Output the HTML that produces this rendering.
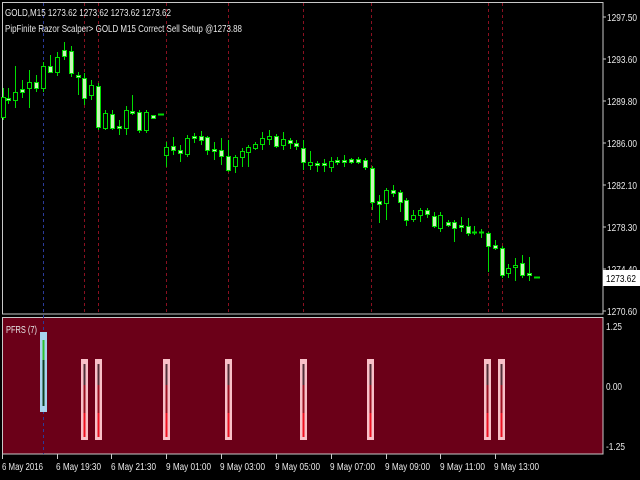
<!DOCTYPE html>
<html><head><meta charset="utf-8"><style>
html,body{margin:0;padding:0;background:#000;width:640px;height:480px;overflow:hidden}
svg{display:block}
text{font-family:"Liberation Sans",sans-serif;font-size:10px;fill:#e8e8e8}
</style></head><body>
<svg width="640" height="480" viewBox="0 0 640 480" xmlns="http://www.w3.org/2000/svg">
<rect width="640" height="480" fill="#000"/>
<rect x="2" y="317" width="601" height="137" fill="#6b0018"/>
<rect x="2.5" y="2.5" width="600.5" height="311.5" fill="none" stroke="#c8c8c8" stroke-width="1"/>
<rect x="2.5" y="317.5" width="600.5" height="136.5" fill="none" stroke="#c8c8c8" stroke-width="1"/>
<g stroke-dasharray="3,3" stroke-width="1">
<line x1="43.5" y1="3" x2="43.5" y2="454" stroke="#2a3a9a"/>
<g stroke="#8a1020">
<line x1="84.5" y1="3" x2="84.5" y2="314"/>
<line x1="98.5" y1="3" x2="98.5" y2="314"/>
<line x1="166.5" y1="3" x2="166.5" y2="314"/>
<line x1="228.5" y1="3" x2="228.5" y2="314"/>
<line x1="303.5" y1="3" x2="303.5" y2="314"/>
<line x1="371.5" y1="3" x2="371.5" y2="314"/>
<line x1="488.5" y1="3" x2="488.5" y2="314"/>
<line x1="502.5" y1="3" x2="502.5" y2="314"/>
</g></g>
<g stroke="#00dd00" stroke-width="1">
<g>
<line x1="3.5" y1="88" x2="3.5" y2="120"/>
<line x1="8.5" y1="88" x2="8.5" y2="104"/>
<line x1="15.5" y1="66" x2="15.5" y2="108"/>
<line x1="22.5" y1="80" x2="22.5" y2="98"/>
<line x1="29.5" y1="70" x2="29.5" y2="108"/>
<line x1="36.5" y1="75" x2="36.5" y2="92"/>
<line x1="43.5" y1="62" x2="43.5" y2="92"/>
<line x1="50.5" y1="55" x2="50.5" y2="72"/>
<line x1="57.5" y1="52" x2="57.5" y2="76"/>
<line x1="64.5" y1="42" x2="64.5" y2="60"/>
<line x1="71.5" y1="46" x2="71.5" y2="77"/>
<line x1="78.5" y1="72" x2="78.5" y2="95"/>
<line x1="84.5" y1="73" x2="84.5" y2="105"/>
<line x1="91.5" y1="80" x2="91.5" y2="100"/>
<line x1="98.5" y1="83" x2="98.5" y2="130"/>
<line x1="105.5" y1="110" x2="105.5" y2="130"/>
<line x1="112.5" y1="110" x2="112.5" y2="130"/>
<line x1="119.5" y1="120" x2="119.5" y2="135"/>
<line x1="126.5" y1="106" x2="126.5" y2="135"/>
<line x1="132.5" y1="95" x2="132.5" y2="115"/>
<line x1="139.5" y1="110" x2="139.5" y2="133"/>
<line x1="146.5" y1="110" x2="146.5" y2="133"/>
<line x1="166.5" y1="142" x2="166.5" y2="167"/>
<line x1="173.5" y1="137" x2="173.5" y2="155"/>
<line x1="180.5" y1="145" x2="180.5" y2="162"/>
<line x1="187.5" y1="135" x2="187.5" y2="157"/>
<line x1="194.5" y1="133" x2="194.5" y2="143"/>
<line x1="201.5" y1="131" x2="201.5" y2="145"/>
<line x1="207.5" y1="136" x2="207.5" y2="155"/>
<line x1="214.5" y1="142" x2="214.5" y2="160"/>
<line x1="221.5" y1="138" x2="221.5" y2="165"/>
<line x1="228.5" y1="140" x2="228.5" y2="172"/>
<line x1="235.5" y1="155" x2="235.5" y2="173"/>
<line x1="242.5" y1="148" x2="242.5" y2="167"/>
<line x1="248.5" y1="145" x2="248.5" y2="167"/>
<line x1="255.5" y1="142" x2="255.5" y2="150"/>
<line x1="262.5" y1="132" x2="262.5" y2="150"/>
<line x1="269.5" y1="130" x2="269.5" y2="145"/>
<line x1="276.5" y1="134" x2="276.5" y2="148"/>
<line x1="283.5" y1="132" x2="283.5" y2="150"/>
<line x1="290.5" y1="138" x2="290.5" y2="149"/>
<line x1="296.5" y1="140" x2="296.5" y2="150"/>
<line x1="303.5" y1="140" x2="303.5" y2="170"/>
<line x1="310.5" y1="151" x2="310.5" y2="170"/>
<line x1="317.5" y1="161" x2="317.5" y2="172"/>
<line x1="324.5" y1="159" x2="324.5" y2="172"/>
<line x1="331.5" y1="157" x2="331.5" y2="172"/>
<line x1="337.5" y1="157" x2="337.5" y2="165"/>
<line x1="344.5" y1="155" x2="344.5" y2="167"/>
<line x1="351.5" y1="158" x2="351.5" y2="164"/>
<line x1="358.5" y1="157" x2="358.5" y2="164"/>
<line x1="365.5" y1="158" x2="365.5" y2="170"/>
<line x1="372.5" y1="166" x2="372.5" y2="210"/>
<line x1="379.5" y1="195" x2="379.5" y2="223"/>
<line x1="386.5" y1="188" x2="386.5" y2="220"/>
<line x1="393.5" y1="185" x2="393.5" y2="197"/>
<line x1="400.5" y1="190" x2="400.5" y2="212"/>
<line x1="406.5" y1="198" x2="406.5" y2="226"/>
<line x1="413.5" y1="210" x2="413.5" y2="222"/>
<line x1="420.5" y1="208" x2="420.5" y2="222"/>
<line x1="427.5" y1="208" x2="427.5" y2="218"/>
<line x1="434.5" y1="212" x2="434.5" y2="228"/>
<line x1="440.5" y1="212" x2="440.5" y2="232"/>
<line x1="448.5" y1="220" x2="448.5" y2="227"/>
<line x1="454.5" y1="220" x2="454.5" y2="242"/>
<line x1="461.5" y1="217" x2="461.5" y2="232"/>
<line x1="468.5" y1="218" x2="468.5" y2="236"/>
<line x1="474.5" y1="226" x2="474.5" y2="235"/>
<line x1="481.5" y1="229" x2="481.5" y2="238"/>
<line x1="488.5" y1="232" x2="488.5" y2="272"/>
<line x1="495.5" y1="240" x2="495.5" y2="250"/>
<line x1="502.5" y1="246" x2="502.5" y2="278"/>
<line x1="508.5" y1="264" x2="508.5" y2="278"/>
<line x1="515.5" y1="258" x2="515.5" y2="281"/>
<line x1="522.5" y1="255" x2="522.5" y2="278"/>
<line x1="529.5" y1="257" x2="529.5" y2="281"/>
</g>
<g fill="#000">
<rect x="1.5" y="97.5" width="4" height="20"/>
<rect x="13.5" y="92.5" width="4" height="8"/>
<rect x="27.5" y="82.5" width="4" height="6"/>
<rect x="41.5" y="66.5" width="4" height="22"/>
<rect x="55.5" y="57.5" width="4" height="15"/>
<rect x="89.5" y="85.5" width="4" height="10"/>
<rect x="103.5" y="113.5" width="4" height="15"/>
<rect x="124.5" y="110.5" width="4" height="18"/>
<rect x="144.5" y="112.5" width="4" height="18"/>
<rect x="164.5" y="147.5" width="4" height="8"/>
<rect x="185.5" y="138.5" width="4" height="16"/>
<rect x="233.5" y="157.5" width="4" height="9"/>
<rect x="240.5" y="151.5" width="4" height="6"/>
<rect x="246.5" y="147.5" width="4" height="5"/>
<rect x="253.5" y="144.5" width="4" height="4"/>
<rect x="260.5" y="138.5" width="4" height="6"/>
<rect x="267.5" y="136.5" width="4" height="3"/>
<rect x="281.5" y="139.5" width="4" height="6"/>
<rect x="308.5" y="162.5" width="4" height="3"/>
<rect x="329.5" y="161.5" width="4" height="6"/>
<rect x="384.5" y="190.5" width="4" height="13"/>
<rect x="411.5" y="215.5" width="4" height="4"/>
<rect x="418.5" y="210.5" width="4" height="5"/>
<rect x="438.5" y="215.5" width="4" height="13"/>
<rect x="506.5" y="268.5" width="4" height="5"/>
<rect x="513.5" y="265.5" width="4" height="2"/>
</g>
<g fill="#c8f5b8">
<rect x="6.5" y="98.5" width="4" height="2"/>
<rect x="20.5" y="89.5" width="4" height="3"/>
<rect x="34.5" y="82.5" width="4" height="6"/>
<rect x="48.5" y="66.5" width="4" height="6"/>
<rect x="62.5" y="50.5" width="4" height="6"/>
<rect x="69.5" y="51.5" width="4" height="22"/>
<rect x="76.5" y="75.5" width="4" height="2"/>
<rect x="82.5" y="78.5" width="4" height="20"/>
<rect x="96.5" y="86.5" width="4" height="41"/>
<rect x="110.5" y="114.5" width="4" height="14"/>
<rect x="117.5" y="126.5" width="4" height="2"/>
<rect x="130.5" y="111.5" width="4" height="2"/>
<rect x="137.5" y="112.5" width="4" height="18"/>
<rect x="151.5" y="115.5" width="4" height="3"/>
<rect x="158.5" y="114" width="5" height="1"/>
<rect x="171.5" y="146.5" width="4" height="4"/>
<rect x="178.5" y="150.5" width="4" height="3"/>
<rect x="192.5" y="136.5" width="4" height="2"/>
<rect x="199.5" y="136.5" width="4" height="4"/>
<rect x="205.5" y="137.5" width="4" height="13"/>
<rect x="212.5" y="149.5" width="4" height="2"/>
<rect x="219.5" y="150.5" width="4" height="6"/>
<rect x="226.5" y="156.5" width="4" height="14"/>
<rect x="274.5" y="136.5" width="4" height="10"/>
<rect x="288.5" y="140.5" width="4" height="3"/>
<rect x="294.5" y="143.5" width="4" height="3"/>
<rect x="301.5" y="148.5" width="4" height="14"/>
<rect x="315.5" y="163.5" width="4" height="2"/>
<rect x="322.5" y="163.5" width="4" height="2"/>
<rect x="335.5" y="160.5" width="4" height="2"/>
<rect x="342.5" y="160.5" width="4" height="2"/>
<rect x="349.5" y="159.5" width="4" height="3"/>
<rect x="356.5" y="159.5" width="4" height="3"/>
<rect x="363.5" y="160.5" width="4" height="7"/>
<rect x="370.5" y="168.5" width="4" height="34"/>
<rect x="377.5" y="201.5" width="4" height="3"/>
<rect x="391.5" y="190.5" width="4" height="3"/>
<rect x="398.5" y="192.5" width="4" height="10"/>
<rect x="404.5" y="200.5" width="4" height="20"/>
<rect x="425.5" y="210.5" width="4" height="4"/>
<rect x="432.5" y="216.5" width="4" height="10"/>
<rect x="446.5" y="222.5" width="4" height="3"/>
<rect x="452.5" y="222.5" width="4" height="6"/>
<rect x="459.5" y="225.5" width="4" height="2"/>
<rect x="466.5" y="226.5" width="4" height="7"/>
<rect x="472.5" y="232" width="4" height="1"/>
<rect x="479.5" y="232" width="4" height="1"/>
<rect x="486.5" y="233.5" width="4" height="13"/>
<rect x="493.5" y="245.5" width="4" height="3"/>
<rect x="500.5" y="248.5" width="4" height="27"/>
<rect x="520.5" y="263.5" width="4" height="12"/>
<rect x="527.5" y="273.5" width="4" height="2"/>
<rect x="534.5" y="277" width="5" height="1"/>
</g>
</g>
<text x="5" y="16" textLength="166" lengthAdjust="spacingAndGlyphs">GOLD,M15  1273.62 1273.62 1273.62 1273.62</text>
<text x="5" y="32" textLength="237" lengthAdjust="spacingAndGlyphs">PipFinite Razor Scalper&gt;   GOLD M15 Correct Sell Setup @1273.88</text>
<g stroke="#c8c8c8"><line x1="603" y1="17" x2="606" y2="17"/><line x1="603" y1="59" x2="606" y2="59"/><line x1="603" y1="101" x2="606" y2="101"/><line x1="603" y1="143" x2="606" y2="143"/><line x1="603" y1="185" x2="606" y2="185"/><line x1="603" y1="227" x2="606" y2="227"/><line x1="603" y1="269" x2="606" y2="269"/><line x1="603" y1="311" x2="606" y2="311"/></g>
<g>
<text x="607" y="21" textLength="30" lengthAdjust="spacingAndGlyphs">1297.50</text>
<text x="607" y="63" textLength="30" lengthAdjust="spacingAndGlyphs">1293.60</text>
<text x="607" y="105" textLength="30" lengthAdjust="spacingAndGlyphs">1289.80</text>
<text x="607" y="147" textLength="30" lengthAdjust="spacingAndGlyphs">1286.00</text>
<text x="607" y="189" textLength="30" lengthAdjust="spacingAndGlyphs">1282.10</text>
<text x="607" y="231" textLength="30" lengthAdjust="spacingAndGlyphs">1278.30</text>
<text x="607" y="273" textLength="30" lengthAdjust="spacingAndGlyphs">1274.40</text>
<text x="607" y="315" textLength="30" lengthAdjust="spacingAndGlyphs">1270.60</text>
<text x="606" y="330" textLength="16" lengthAdjust="spacingAndGlyphs">1.25</text>
<text x="606" y="390" textLength="16" lengthAdjust="spacingAndGlyphs">0.00</text>
<text x="606" y="450" textLength="19" lengthAdjust="spacingAndGlyphs">-1.25</text>
</g>
<rect x="603" y="270" width="37" height="16" fill="#fff"/>
<text x="606" y="282" style="fill:#000" textLength="30" lengthAdjust="spacingAndGlyphs">1273.62</text>
<text x="6" y="333" textLength="31" lengthAdjust="spacingAndGlyphs">PFRS (7)</text>
<rect x="40" y="332" width="7" height="80" fill="#a8d4ee"/>
<line x1="43.5" y1="340" x2="43.5" y2="360" stroke="#30c030" stroke-width="2"/>
<line x1="43.5" y1="360" x2="43.5" y2="406" stroke="#104020" stroke-width="2"/>
<g id="pb">
<rect x="81" y="359" width="7" height="81" fill="#f8c0c8"/>
<line x1="84.5" y1="364" x2="84.5" y2="385" stroke="#503038" stroke-width="2"/>
<line x1="84.5" y1="385" x2="84.5" y2="413" stroke="#9a1020" stroke-width="2"/>
<line x1="84.5" y1="413" x2="84.5" y2="437" stroke="#ee1020" stroke-width="2"/>
</g>
<use href="#pb" x="14"/>
<use href="#pb" x="82"/>
<use href="#pb" x="144"/>
<use href="#pb" x="219"/>
<use href="#pb" x="286"/>
<use href="#pb" x="403"/>
<use href="#pb" x="417"/>
<g stroke="#c8c8c8"><line x1="2.5" y1="454" x2="2.5" y2="459"/><line x1="57.5" y1="454" x2="57.5" y2="459"/><line x1="111.5" y1="454" x2="111.5" y2="459"/><line x1="166.5" y1="454" x2="166.5" y2="459"/><line x1="221.5" y1="454" x2="221.5" y2="459"/><line x1="276.5" y1="454" x2="276.5" y2="459"/><line x1="331.5" y1="454" x2="331.5" y2="459"/><line x1="386.5" y1="454" x2="386.5" y2="459"/><line x1="440.5" y1="454" x2="440.5" y2="459"/><line x1="495.5" y1="454" x2="495.5" y2="459"/></g>
<g>
<text x="2" y="470" textLength="41" lengthAdjust="spacingAndGlyphs">6 May 2016</text>
<text x="56" y="470" textLength="45" lengthAdjust="spacingAndGlyphs">6 May 19:30</text>
<text x="111" y="470" textLength="45" lengthAdjust="spacingAndGlyphs">6 May 21:30</text>
<text x="166" y="470" textLength="45" lengthAdjust="spacingAndGlyphs">9 May 01:00</text>
<text x="220" y="470" textLength="45" lengthAdjust="spacingAndGlyphs">9 May 03:00</text>
<text x="275" y="470" textLength="45" lengthAdjust="spacingAndGlyphs">9 May 05:00</text>
<text x="330" y="470" textLength="45" lengthAdjust="spacingAndGlyphs">9 May 07:00</text>
<text x="385" y="470" textLength="45" lengthAdjust="spacingAndGlyphs">9 May 09:00</text>
<text x="440" y="470" textLength="45" lengthAdjust="spacingAndGlyphs">9 May 11:00</text>
<text x="494" y="470" textLength="45" lengthAdjust="spacingAndGlyphs">9 May 13:00</text>
</g>
</svg>
</body></html>
